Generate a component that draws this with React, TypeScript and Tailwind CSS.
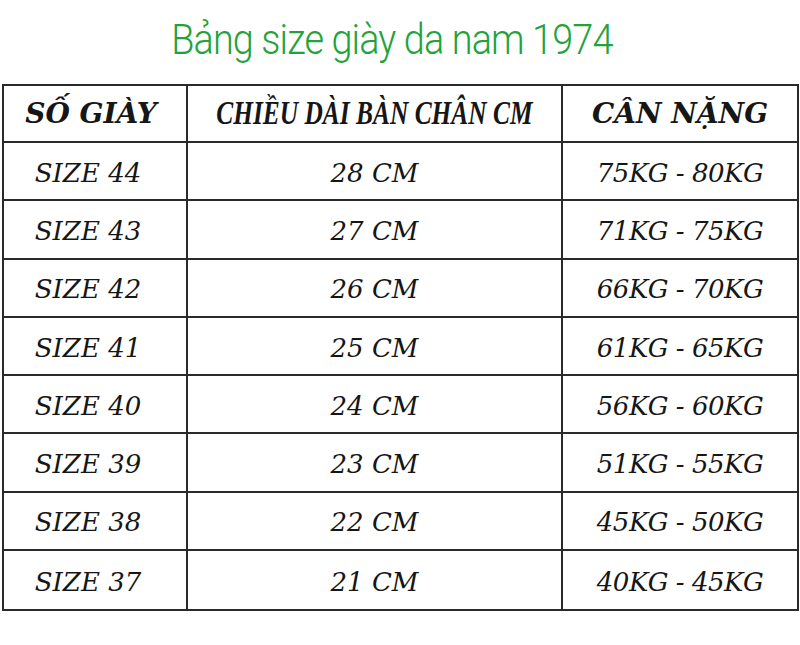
const rows = [
  ["SIZE 44", "28 CM", "75KG - 80KG"],
  ["SIZE 43", "27 CM", "71KG - 75KG"],
  ["SIZE 42", "26 CM", "66KG - 70KG"],
  ["SIZE 41", "25 CM", "61KG - 65KG"],
  ["SIZE 40", "24 CM", "56KG - 60KG"],
  ["SIZE 39", "23 CM", "51KG - 55KG"],
  ["SIZE 38", "22 CM", "45KG - 50KG"],
  ["SIZE 37", "21 CM", "40KG - 45KG"],
];

export default function App() {
  return (
    <div className="w-[800px] h-[645px] bg-white overflow-hidden">
      {/* TITLE */}
      <div className="h-[84px] flex justify-center">
        <h1 className="pt-[8px] pr-[18px] text-[43px] leading-[62px] tracking-[-1px] scale-x-[0.88] text-[#1fa33a] font-['Roboto',sans-serif] font-light whitespace-nowrap">
          Bảng size giày da nam 1974
        </h1>
      </div>

      {/* TABLE */}
      <div className="ml-[2px] w-[797px] border-2 border-[#2a2a2a] font-['DejaVu_Serif','Liberation_Serif',serif] italic text-[#161616]">
        <div className="grid grid-cols-[184px_375px_1fr] h-[57px] border-b-2 border-[#2a2a2a] font-bold text-[28px]">
          <div className="flex items-center justify-center border-r-2 border-[#2a2a2a] pr-[8px]">SỐ GIÀY</div>
          <div className="flex items-center justify-center border-r-2 border-[#2a2a2a] overflow-hidden">
            <span className="font-['Liberation_Serif',serif] text-[33px] scale-x-[0.77] whitespace-nowrap">
              CHIỀU DÀI BÀN CHÂN CM
            </span>
          </div>
          <div className="flex items-center justify-center">CÂN NẶNG</div>
        </div>
        {rows.map((r, i) => (
          <div
            key={r[0]}
            className={
              "grid grid-cols-[184px_375px_1fr] h-[58.3px] text-[26px] " +
              (i < rows.length - 1 ? "border-b-2 border-[#2a2a2a]" : "")
            }
          >
            <div className="flex items-center justify-center border-r-2 border-[#2a2a2a] pt-[4px] pr-[14px]">{r[0]}</div>
            <div className="flex items-center justify-center border-r-2 border-[#2a2a2a] pt-[4px]">{r[1]}</div>
            <div className="flex items-center justify-center pt-[4px] tracking-[-0.5px]">{r[2]}</div>
          </div>
        ))}
      </div>
    </div>
  );
}
